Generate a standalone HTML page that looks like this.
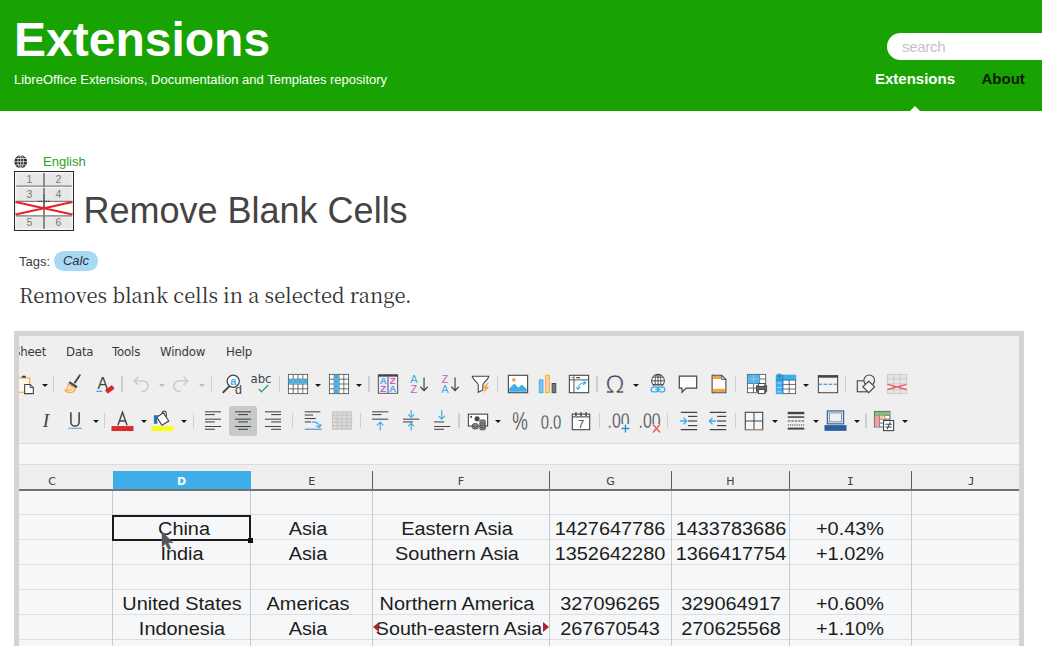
<!DOCTYPE html>
<html lang="en"><head><meta charset="utf-8"><title>Remove Blank Cells - LibreOffice Extensions</title>
<style>
*{margin:0;padding:0;box-sizing:border-box}
html,body{width:1042px;height:646px;overflow:hidden;background:#fff;font-family:"Liberation Sans",sans-serif}
#hd{position:absolute;left:0;top:0;width:1042px;height:111px;background:#18a303}
.site{position:absolute;left:14px;top:12px;font-size:48px;line-height:56px;font-weight:bold;color:#fff;white-space:nowrap}
.sub{position:absolute;left:14px;top:72px;font-size:13px;line-height:15px;color:#fff;white-space:nowrap}
.search{position:absolute;left:887px;top:33px;width:200px;height:27px;border-radius:13.5px;background:#fff}
.search span{position:absolute;left:15px;top:3.6px;font:15px/19px "Liberation Sans",sans-serif;letter-spacing:-0.3px;color:#c6c0c8}
nav a{position:absolute;top:69.5px;font-size:15px;line-height:17px;font-weight:bold;white-space:nowrap}
nav .n1{left:875px;color:#fff}
nav .n2{left:981.5px;color:#0a1a00}
.tri{position:absolute;left:910px;top:106px;width:0;height:0;border-left:5px solid transparent;border-right:5px solid transparent;border-bottom:5px solid #fff}
.globe{position:absolute;left:13.8px;top:155px;width:13.4px;height:13.4px}
.lang{position:absolute;left:43px;top:154px;font-size:13px;line-height:15px;color:#2ea11e}
.logo{position:absolute;left:14px;top:171px;width:60px;height:60px}
.title{position:absolute;left:83.5px;top:190px;font-size:36px;line-height:42px;font-weight:normal;color:#444;white-space:nowrap}
.tags{position:absolute;left:19px;top:254px;font-size:13px;line-height:15px;color:#3c3c3c}
.pill{position:absolute;left:54px;top:251px;width:44px;height:19.5px;border-radius:9.75px;background:#a8d9f4;font-size:13px;line-height:20px;font-style:italic;color:#2c3038;text-align:center}
.desc{position:absolute;left:19px;top:281px;font:20.15px/28px "Noto Serif CJK SC","DejaVu Serif",serif;color:#333;white-space:nowrap}
.shot{position:absolute;left:14px;top:331px;width:1010px;height:330px;background:#d4d4d4}
.inner{position:absolute;left:4.7px;top:4.7px;width:1000.6px;height:330px;background:#efefef;overflow:hidden}
.pg *{position:absolute}
.mn{top:342.7px;font:13px/17px "DejaVu Sans",sans-serif;color:#3a3a3a;white-space:nowrap;letter-spacing:-0.2px;transform:scaleX(0.905);transform-origin:0 50%}
.band1{left:0;top:443px;width:1042px;height:21.5px;background:#f5f6f7;border-top:1px solid #dcdcdc;border-bottom:1px solid #dcdcdc}
.band2{left:0;top:464.5px;width:1042px;height:26px;background:#eeeeee}
.gridbg{left:0;top:490px;width:1042px;height:200px;background:#f5f7f8}
.dsel{top:471px;height:19.5px;background:#3daee9}
.ch{top:474.7px;width:40px;text-align:center;font:11px/14px "DejaVu Sans",sans-serif;color:#444;-webkit-text-stroke:0.08px #444}
.ch.sel{color:#fff;font-weight:bold;-webkit-text-stroke:0}
.tick{top:471px;width:1.2px;height:19px;background:#606060}
.hline{left:0;top:489.3px;width:1042px;height:1.3px;background:#727272}
.gh{left:0;width:1042px;height:1px;background:#dcdee0}
.gv{top:490.5px;width:1px;height:200px;background:#c9cbcc}
.selbox{border:2px solid #1a1a1a}
.selh{width:5px;height:5px;background:#111}
.ct{width:300px;text-align:center;font:18px/22px "Liberation Sans",sans-serif;color:#1c1c1c;white-space:nowrap;transform:scaleX(1.105);transform-origin:50% 50%}
.ov{width:6px;height:10px}
.cur{width:14px;height:20px}
.ic{overflow:visible}
.dd{width:0;height:0;border-left:3px solid transparent;border-right:3px solid transparent;border-top:3.4px solid #1a1a1a}
.sp{width:1.2px;height:15.5px;background:#cfcfcf}
.dd.g{border-top-color:#bdbdbd}
.pressed{width:28px;height:30px;border-radius:3px;background:#c8c9ca}

</style></head>
<body>
<header id="hd">
  <h1 class="site">Extensions</h1>
  <p class="sub">LibreOffice Extensions, Documentation and Templates repository</p>
  <div class="search"><span>search</span></div>
  <nav><a class="n1">Extensions</a><a class="n2">About</a></nav>
  <i class="tri"></i>
</header>
<main>
  <svg class="globe" viewBox="0 0 16 16"><circle cx="8" cy="8" r="7.6" fill="#2b2b2b"/><g fill="none" stroke="#fff" stroke-width="0.85"><ellipse cx="8" cy="8" rx="3.3" ry="7.6"/><path d="M.4 8h15.2M8 .4v15.2M1.7 4.2h12.6M1.7 11.8h12.6"/></g></svg>
  <a class="lang">English</a>
  <svg class="logo" viewBox="0 0 60 60">
    <rect x="0.5" y="0.5" width="59" height="59" fill="#f4f4f4" stroke="#2a2a2a" stroke-width="1"/>
    <rect x="2.5" y="2.5" width="55" height="55" fill="#e7e7e7"/>
    <rect x="2" y="31" width="56" height="13" fill="#fff"/>
    <g stroke="#808080" stroke-width="1.2"><path d="M2 15.2H58M2 30.3H58M2 44.8H58"/><path d="M30 2V58" stroke-width="1.8"/></g>
    <path d="M2 16.4H58" stroke="#fafafa" stroke-width="0.8"/>
    <g font-family="Liberation Sans, sans-serif" font-size="10.5" fill="#777" text-anchor="middle"><text x="15.5" y="12.3">1</text><text x="44.5" y="12.3">2</text><text x="15.5" y="26.8">3</text><text x="44.5" y="26.8">4</text><text x="15.5" y="55">5</text><text x="44.5" y="55">6</text></g>
    <path d="M1.5 31L58.5 43.5M1.5 43.5L58.5 31" stroke="#e8212b" stroke-width="2.3"/>
    <path d="M24 30.3h12M30 24v13" stroke="#333" stroke-width="1" stroke-dasharray="1.5 1"/>
  </svg>
  <h2 class="title">Remove Blank Cells</h2>
  <span class="tags">Tags:</span><span class="pill">Calc</span>
  <p class="desc">Removes blank cells in a selected range.</p>
  <div class="shot"><div class="inner">
<div class="pg" style="position:absolute;left:-18.7px;top:-335.7px;width:1042px;height:700px">
<span class="mn" style="left:13.2px">Sheet</span>
<span class="mn" style="left:66px">Data</span>
<span class="mn" style="left:112.2px">Tools</span>
<span class="mn" style="left:160.3px">Window</span>
<span class="mn" style="left:225.9px">Help</span>
<div class="band1"></div><div class="band2"></div><div class="gridbg"></div>
<div class="dsel" style="left:112.6px;width:138.20000000000002px"></div>
<span class="ch" style="left:32px">C</span>
<span class="ch sel" style="left:161.7px">D</span>
<span class="ch" style="left:291.7px">E</span>
<span class="ch" style="left:441px">F</span>
<span class="ch" style="left:590.5px">G</span>
<span class="ch" style="left:710.5px">H</span>
<span class="ch" style="left:830.3px;font-family:DejaVu Sans Mono,monospace">I</span>
<span class="ch" style="left:951px;font-family:DejaVu Sans Mono,monospace">J</span>
<i class="tick" style="left:372.0px"></i>
<i class="tick" style="left:548.6px"></i>
<i class="tick" style="left:670.6px"></i>
<i class="tick" style="left:788.6px"></i>
<i class="tick" style="left:910.8px"></i>
<div class="hline"></div>
<i class="gh" style="top:514.3px"></i>
<i class="gh" style="top:539.2px"></i>
<i class="gh" style="top:564.2px"></i>
<i class="gh" style="top:589.2px"></i>
<i class="gh" style="top:614.2px"></i>
<i class="gh" style="top:639.3px"></i>
<i class="gv" style="left:112.1px"></i>
<i class="gv" style="left:250.3px"></i>
<i class="gv" style="left:372.1px"></i>
<i class="gv" style="left:548.7px"></i>
<i class="gv" style="left:670.7px"></i>
<i class="gv" style="left:788.7px"></i>
<i class="gv" style="left:910.9px"></i>
<div class="selbox" style="left:112.39999999999999px;top:514.5px;width:138.8px;height:26px"></div>
<div class="selh" style="left:248.20000000000002px;top:537.5px"></div>
<span class="ct" style="left:34.30px;top:518.00px">China</span>
<span class="ct" style="left:158.30px;top:518.00px">Asia</span>
<span class="ct" style="left:307.30px;top:518.00px">Eastern Asia</span>
<span class="ct" style="left:460.20px;top:518.00px">1427647786</span>
<span class="ct" style="left:580.70px;top:518.00px">1433783686</span>
<span class="ct" style="left:700.30px;top:518.00px">+0.43%</span>
<span class="ct" style="left:31.70px;top:543.00px">India</span>
<span class="ct" style="left:158.30px;top:543.00px">Asia</span>
<span class="ct" style="left:307.30px;top:543.00px">Southern Asia</span>
<span class="ct" style="left:460.20px;top:543.00px">1352642280</span>
<span class="ct" style="left:580.70px;top:543.00px">1366417754</span>
<span class="ct" style="left:700.30px;top:543.00px">+1.02%</span>
<span class="ct" style="left:31.70px;top:593.00px">United States</span>
<span class="ct" style="left:158.30px;top:593.00px">Americas</span>
<span class="ct" style="left:307.30px;top:593.00px">Northern America</span>
<span class="ct" style="left:460.20px;top:593.00px">327096265</span>
<span class="ct" style="left:580.70px;top:593.00px">329064917</span>
<span class="ct" style="left:700.30px;top:593.00px">+0.60%</span>
<span class="ct" style="left:31.70px;top:617.80px">Indonesia</span>
<span class="ct" style="left:158.30px;top:617.80px">Asia</span>
<span class="ct" style="left:309.30px;top:617.80px;transform:scaleX(1.093)">South-eastern Asia</span>
<span class="ct" style="left:460.20px;top:617.80px">267670543</span>
<span class="ct" style="left:580.70px;top:617.80px">270625568</span>
<span class="ct" style="left:700.30px;top:617.80px">+1.10%</span>
<svg class="ov" style="left:373.2px;top:622.3px" viewBox="0 0 6 10"><path d="M6 0v10L0 5z" fill="#a8242a"/></svg>
<svg class="ov" style="left:543px;top:622.3px" viewBox="0 0 6 10"><path d="M0 0v10L6 5z" fill="#a8242a"/></svg>
<svg class="cur" style="left:160.5px;top:531px" viewBox="0 0 14 20"><path d="M1 0.5V16l3.6-3.3L7.3 18.6l2.6-1.2L7.2 11.7H12z" fill="#555" stroke="#666" stroke-width="0.5"/></svg>
<svg class="ic" style="left:15.30px;top:372.60px;width:22px;height:22px" viewBox="0 0 24 24"><path d="M3.5 5.5h12.5v15.5h-12.5z" fill="#fcf6e8" stroke="#f2a33c" stroke-width="1.2"/><path d="M7 5.2a2.6 2.6 0 0 1 5.2 0z" fill="#414548"/><path d="M10.5 12.5h6l3.5 3.5v6.5h-9.5z" fill="#fff" stroke="#414548" stroke-width="1.2"/><path d="M16.5 12.5v3.5H20" fill="none" stroke="#414548" stroke-width="1"/></svg>
<svg class="ic" style="left:62.30px;top:372.60px;width:22px;height:22px" viewBox="0 0 24 24"><path d="M19.5 2.5l-5.5 8" stroke="#414548" stroke-width="2" stroke-linecap="round"/><path d="M8.5 9l8.5 5.5-1.3 2L7.2 11z" fill="#414548"/><path d="M6.8 12l7.8 5c-.6 2.8-2.3 4.3-5.4 4.3-2.6 0-5-.6-6-2.2 2.3-1.5 3-4 3.6-7.1z" fill="#fbe3b4" stroke="#f2a33c" stroke-width="1.1"/><path d="M4.5 18.5c2.5.5 4.5 0 6.5-1" stroke="#f2a33c" stroke-width="1" fill="none"/></svg>
<svg class="ic" style="left:93.50px;top:372.60px;width:22px;height:22px" viewBox="0 0 24 24"><text x="9.5" y="17" font-family="Liberation Sans, sans-serif" font-size="17" text-anchor="middle" fill="#414548">A</text><path d="M2.5 20H9" stroke="#3daee9" stroke-width="1.4"/><rect x="12.5" y="15.5" width="9.5" height="5" rx="1" transform="rotate(-35 17 18)" fill="#da2a2a"/></svg>
<svg class="ic" style="left:128.50px;top:371.10px;width:25px;height:25px" viewBox="0 0 24 24"><path d="M5 9.5h8.5a5 5 0 0 1 0 10h-1.5" fill="none" stroke="#c6c6c6" stroke-width="1.3"/><path d="M9 5.5L5 9.5l4 4" fill="none" stroke="#c6c6c6" stroke-width="1.2"/></svg>
<svg class="ic" style="left:168.30px;top:371.10px;width:25px;height:25px" viewBox="0 0 24 24"><path d="M19 9.5h-8.5a5 5 0 0 0 0 10h1.5" fill="none" stroke="#c6c6c6" stroke-width="1.3"/><path d="M15 5.5l4 4-4 4" fill="none" stroke="#c6c6c6" stroke-width="1.2"/></svg>
<svg class="ic" style="left:221.00px;top:372.60px;width:22px;height:22px" viewBox="0 0 24 24"><circle cx="13.3" cy="9" r="6.6" fill="#fff" stroke="#414548" stroke-width="1.3"/><path d="M9 14.5L2.5 21" stroke="#414548" stroke-width="2" stroke-linecap="round"/><text x="13.4" y="12.8" font-family="Liberation Sans, sans-serif" font-size="12" font-weight="bold" text-anchor="middle" fill="#3daee9">a</text><text x="19" y="22.5" font-family="Liberation Sans, sans-serif" font-size="13.5" text-anchor="middle" fill="#414548">d</text></svg>
<svg class="ic" style="left:250.00px;top:372.60px;width:22px;height:22px" viewBox="0 0 24 24"><text x="12" y="11" font-family="DejaVu Sans, sans-serif" font-size="13" text-anchor="middle" fill="#414548" textLength="23" lengthAdjust="spacingAndGlyphs">abc</text><path d="M9.5 17.5l3 3L20 13" fill="none" stroke="#3aa67c" stroke-width="1.5"/></svg>
<svg class="ic" style="left:287.00px;top:372.60px;width:22px;height:22px" viewBox="0 0 24 24"><rect x="1.5" y="1.5" width="21" height="21" fill="#fff" stroke="#54585c" stroke-width="0.95"/><path d="M6.75 1.5v21M12.00 1.5v21M17.25 1.5v21M1.5 6.75h21M1.5 12.00h21M1.5 17.25h21" stroke="#54585c" stroke-width="0.95" fill="none"/><rect x="2.1" y="6.9" width="19.8" height="4.6" fill="#3daee9"/><rect x="2.1" y="6.9" width="19.8" height="4.6" fill="none"/><path d="M6.75 6.75v5M12 6.75v5M17.25 6.75v5" stroke="#7fc8ee" stroke-width="0.8"/></svg>
<svg class="ic" style="left:327.70px;top:372.60px;width:22px;height:22px" viewBox="0 0 24 24"><rect x="1.5" y="1.5" width="21" height="21" fill="#fff" stroke="#54585c" stroke-width="0.95"/><path d="M6.75 1.5v21M12.00 1.5v21M17.25 1.5v21M1.5 6.75h21M1.5 12.00h21M1.5 17.25h21" stroke="#54585c" stroke-width="0.95" fill="none"/><rect x="6.9" y="2.1" width="4.6" height="19.8" fill="#3daee9"/><path d="M6.75 6.75h5M6.75 12h5M6.75 17.25h5" stroke="#7fc8ee" stroke-width="0.8"/></svg>
<svg class="ic" style="left:376.60px;top:372.60px;width:22px;height:22px" viewBox="0 0 24 24"><rect x="1.5" y="2" width="21" height="20" fill="#fff" stroke="#414548" stroke-width="1.2"/><rect x="2" y="4" width="10" height="17.5" fill="#e4ecfa"/><rect x="12" y="4" width="10" height="17.5" fill="#f7e8f5"/><path d="M1.5 3h21" stroke="#414548" stroke-width="2"/><path d="M12 4v18" stroke="#414548" stroke-width="1"/><g font-family="Liberation Sans, sans-serif" font-size="10.5" font-weight="bold" text-anchor="middle"><text x="6.8" y="12.3" fill="#3daee9">A</text><text x="6.8" y="21.2" fill="#c25fb6">Z</text><text x="17.2" y="12.3" fill="#c25fb6">Z</text><text x="17.2" y="21.2" fill="#3daee9">A</text></g></svg>
<svg class="ic" style="left:408.00px;top:372.60px;width:22px;height:22px" viewBox="0 0 24 24"><g font-family="Liberation Sans, sans-serif" font-size="12" text-anchor="middle"><text x="6.5" y="10.5" fill="#3daee9">A</text><text x="6.5" y="21.5" fill="#c25fb6">Z</text></g><path d="M17.5 5v14M13.5 15l4 4.2 4-4.2" fill="none" stroke="#414548" stroke-width="1.3"/></svg>
<svg class="ic" style="left:439.00px;top:372.60px;width:22px;height:22px" viewBox="0 0 24 24"><g font-family="Liberation Sans, sans-serif" font-size="12" text-anchor="middle"><text x="6.5" y="10.5" fill="#c25fb6">Z</text><text x="6.5" y="21.5" fill="#3daee9">A</text></g><path d="M17.5 5v14M13.5 15l4 4.2 4-4.2" fill="none" stroke="#414548" stroke-width="1.3"/></svg>
<svg class="ic" style="left:469.50px;top:372.60px;width:22px;height:22px" viewBox="0 0 24 24"><path d="M2.5 3.5h18c0 3-6 6.5-6.5 9.5v5.5l-5 2.5v-8c-.5-3-6.5-6.5-6.5-9.5z" fill="#fff" stroke="#414548" stroke-width="1.2"/><path d="M19 11l-5.5 6h3.5l-3 5.5 7-7.5h-3.5l3-4z" fill="#f2a33c"/></svg>
<svg class="ic" style="left:506.50px;top:372.60px;width:22px;height:22px" viewBox="0 0 24 24"><rect x="1.5" y="2.5" width="21" height="19" fill="#fff" stroke="#414548" stroke-width="1.2"/><path d="M2.5 20.5v-3.5l5.5-5.5 4.5 4.5 3.5-3.5 5.5 5v3z" fill="#3daee9"/><circle cx="7.5" cy="7.5" r="2" fill="#f2a33c"/></svg>
<svg class="ic" style="left:537.00px;top:372.60px;width:22px;height:22px" viewBox="0 0 24 24"><rect x="2.5" y="7.5" width="4" height="14" fill="#7cc4ea" stroke="#3daee9" stroke-width="1"/><rect x="9.5" y="2.5" width="4" height="19" fill="#fbd59a" stroke="#f2a33c" stroke-width="1"/><rect x="16.5" y="11.5" width="4" height="10" fill="#777" stroke="#414548" stroke-width="1"/></svg>
<svg class="ic" style="left:567.50px;top:372.60px;width:22px;height:22px" viewBox="0 0 24 24"><rect x="1.5" y="2.5" width="21" height="19" fill="#fff" stroke="#414548" stroke-width="1.2"/><path d="M6.5 3v18M2 7.5h20" stroke="#414548" stroke-width="1"/><path d="M4 5h1M9 5h4" stroke="#414548" stroke-width="1.5"/><path d="M10 17.5c0-4 3-7 8-7M15.5 8l3 2.5-3 2.5M12.5 15l-2.5 3-2.5-3" fill="none" stroke="#3daee9" stroke-width="1.2" transform="translate(1 0)"/></svg>
<svg class="ic" style="left:603.50px;top:372.60px;width:22px;height:22px" viewBox="0 0 24 24"><text x="12" y="21.5" font-family="DejaVu Sans, sans-serif" font-size="27" text-anchor="middle" fill="#414548" stroke="#efefef" stroke-width="0.8">Ω</text></svg>
<svg class="ic" style="left:646.70px;top:372.60px;width:22px;height:22px" viewBox="0 0 24 24"><circle cx="12" cy="8.5" r="7" fill="#fff" stroke="#414548" stroke-width="1.1"/><ellipse cx="12" cy="8.5" rx="3.2" ry="7" fill="none" stroke="#414548" stroke-width="1"/><path d="M5 8.5h14M12 1.5v14M6.5 4.5h11M6.5 12.5h11" stroke="#414548" stroke-width="1"/><rect x="4" y="14.5" width="16" height="7" fill="#efefef"/><rect x="4.5" y="15.5" width="7.5" height="5" rx="2.5" fill="none" stroke="#3daee9" stroke-width="1.4"/><rect x="12" y="15.5" width="7.5" height="5" rx="2.5" fill="none" stroke="#3daee9" stroke-width="1.4"/><path d="M9 18h6" stroke="#3daee9" stroke-width="1.4"/></svg>
<svg class="ic" style="left:677.00px;top:372.60px;width:22px;height:22px" viewBox="0 0 24 24"><path d="M2.5 3.5h19v13h-11.5l-4.5 4.5v-4.5h-3z" fill="#fff" stroke="#414548" stroke-width="1.3"/></svg>
<svg class="ic" style="left:707.70px;top:372.60px;width:22px;height:22px" viewBox="0 0 24 24"><path d="M4.5 2.5h10.5l4.5 4.5v14.5h-15z" fill="#fff" stroke="#414548" stroke-width="1.2"/><path d="M15 2.5v4.5h4.5" fill="none" stroke="#414548" stroke-width="1"/><rect x="5.2" y="3.2" width="9" height="3.3" fill="#f2a33c"/><rect x="5.2" y="17.3" width="13.6" height="3.5" fill="#f2a33c"/></svg>
<svg class="ic" style="left:746.00px;top:372.60px;width:22px;height:22px" viewBox="0 0 24 24"><rect x="1.5" y="1.5" width="20" height="20" fill="#fff" stroke="#54585c" stroke-width="0.95"/><path d="M8.17 1.5v20M14.83 1.5v20M1.5 6.50h20M1.5 11.50h20M1.5 16.50h20" stroke="#54585c" stroke-width="0.95" fill="none"/><rect x="2" y="2" width="12.8" height="9.5" fill="#3daee9" opacity=".9"/><path d="M8.2 2v9.5M2 6.5h12.8" stroke="#9ad4f3" stroke-width=".8"/><rect x="11.5" y="14" width="11" height="6" fill="#666" stroke="#414548" stroke-width="1"/><rect x="13.5" y="11.5" width="7" height="3" fill="#fff" stroke="#414548" stroke-width="1"/><rect x="13.5" y="18" width="7" height="4.5" fill="#fff" stroke="#414548" stroke-width="1"/></svg>
<svg class="ic" style="left:774.50px;top:372.60px;width:22px;height:22px" viewBox="0 0 24 24"><rect x="1.5" y="2.5" width="21" height="20" fill="#fff" stroke="#54585c" stroke-width="0.95"/><path d="M8.50 2.5v20M15.50 2.5v20M1.5 7.50h21M1.5 12.50h21M1.5 17.50h21" stroke="#54585c" stroke-width="0.95" fill="none"/><rect x="1" y="2" width="7.5" height="21" fill="#3daee9"/><rect x="1" y="2" width="22" height="5.5" fill="#3daee9"/><path d="M1 7.5h22M8.5 2v21" stroke="#1d7fb5" stroke-width=".9"/><path d="M4.7 0v6M2.2 1.5l5 3M7.2 1.5l-5 3" stroke="#1d7fb5" stroke-width=".9"/><path d="M2.5 11h4.5M2.5 15.8h4.5M2.5 20.5h4.5" stroke="#bfe3f7" stroke-width="1"/></svg>
<svg class="ic" style="left:816.50px;top:372.60px;width:22px;height:22px" viewBox="0 0 24 24"><rect x="1.5" y="3" width="21" height="18.5" fill="#f3f3f3" stroke="#414548" stroke-width="1.1"/><rect x="1" y="2.5" width="22" height="2.6" fill="#414548"/><path d="M1.5 12.2h21" stroke="#2f7fc0" stroke-width="1.1" stroke-dasharray="4 1.6"/></svg>
<svg class="ic" style="left:855.00px;top:372.60px;width:22px;height:22px" viewBox="0 0 24 24"><rect x="2.5" y="8.5" width="11" height="12" fill="#efefef" stroke="#414548" stroke-width="1.2"/><circle cx="15.5" cy="8" r="5.8" fill="#efefef" stroke="#414548" stroke-width="1.2"/><path d="M15 9l6.5 6-6.5 6.5-6.5-6.5z" fill="#f6f6f6" stroke="#414548" stroke-width="1.2"/></svg>
<svg class="ic" style="left:885.80px;top:372.60px;width:22px;height:22px" viewBox="0 0 24 24"><rect x="1.5" y="1.5" width="21" height="21" fill="#e6e6e6" stroke="#c8c8c8" stroke-width="1"/><rect x="1.5" y="12" width="21" height="6" fill="#f4f4f4"/><path d="M8.5 1.5v21M15.5 1.5v21M1.5 6.5h21M1.5 12h21M1.5 18h21" stroke="#c4c4c4" stroke-width=".9"/><path d="M1.5 12.5l21 5.5M1.5 18l21-5.5" stroke="#ee5a6a" stroke-width="1.5"/></svg>
<svg class="ic" style="left:34.60px;top:409.60px;width:22px;height:22px" viewBox="0 0 24 24"><text x="12" y="19" font-family="Liberation Serif, serif" font-style="italic" font-size="21" text-anchor="middle" fill="#414548">I</text></svg>
<svg class="ic" style="left:63.80px;top:409.60px;width:22px;height:22px" viewBox="0 0 24 24"><path d="M7.5 2.5v10.5a4.5 4.5 0 0 0 9 0V2.5" fill="none" stroke="#414548" stroke-width="1.7"/><path d="M4.5 20h15" stroke="#6aaedb" stroke-width="1.3"/></svg>
<svg class="ic" style="left:111.20px;top:409.10px;width:23px;height:23px" viewBox="0 0 24 24"><path d="M7.2 17L12 3.5 16.8 17M8.8 12.5h6.4" fill="none" stroke="#414548" stroke-width="1.5"/><rect x="0.5" y="17.8" width="23" height="5.2" fill="#da2a2a"/></svg>
<svg class="ic" style="left:151.30px;top:409.10px;width:23px;height:23px" viewBox="0 0 24 24"><path d="M6 8.5l7-4.5 5.5 8.5-7 4.5z" fill="#fff" stroke="#414548" stroke-width="1.2"/><path d="M11.5 5c0-4 4.5-4 4.5 0v3" fill="none" stroke="#414548" stroke-width="1.1"/><path d="M3 6.5h5.5l-2 2.5v6.5h-3.5z" fill="#2a6fc0"/><rect x="0.5" y="17.8" width="23" height="5.2" fill="#fbfb22"/></svg>
<svg class="ic" style="left:202.00px;top:409.60px;width:22px;height:22px" viewBox="0 0 24 24"><path d="M3.2 2H20.8" stroke="#414548" stroke-width="1.15"/><path d="M3.2 5H14" stroke="#414548" stroke-width="1.15"/><path d="M3.2 10H20.8" stroke="#414548" stroke-width="1.15"/><path d="M3.2 13H14" stroke="#414548" stroke-width="1.15"/><path d="M3.2 18H20.8" stroke="#414548" stroke-width="1.15"/><path d="M3.2 21H14" stroke="#414548" stroke-width="1.15"/></svg>
<div class="pressed" style="left:229.2px;top:405.5px"></div>
<svg class="ic" style="left:232.20px;top:409.60px;width:22px;height:22px" viewBox="0 0 24 24"><path d="M3.2 2H20.8" stroke="#414548" stroke-width="1.15"/><path d="M6.6 5H17.4" stroke="#414548" stroke-width="1.15"/><path d="M3.2 10H20.8" stroke="#414548" stroke-width="1.15"/><path d="M6.6 13H17.4" stroke="#414548" stroke-width="1.15"/><path d="M3.2 18H20.8" stroke="#414548" stroke-width="1.15"/><path d="M6.6 21H17.4" stroke="#414548" stroke-width="1.15"/></svg>
<svg class="ic" style="left:262.00px;top:409.60px;width:22px;height:22px" viewBox="0 0 24 24"><path d="M3.2 2H20.8" stroke="#414548" stroke-width="1.15"/><path d="M10 5H20.8" stroke="#414548" stroke-width="1.15"/><path d="M3.2 10H20.8" stroke="#414548" stroke-width="1.15"/><path d="M10 13H20.8" stroke="#414548" stroke-width="1.15"/><path d="M3.2 18H20.8" stroke="#414548" stroke-width="1.15"/><path d="M10 21H20.8" stroke="#414548" stroke-width="1.15"/></svg>
<svg class="ic" style="left:301.70px;top:409.60px;width:22px;height:22px" viewBox="0 0 24 24"><path d="M3 2H20" stroke="#414548" stroke-width="1.15"/><path d="M3 5.5H12" stroke="#414548" stroke-width="1.15"/><path d="M3 9.3H15" stroke="#414548" stroke-width="1.15"/><path d="M3 13H10" stroke="#414548" stroke-width="1.15"/><path d="M3 21h18.5" stroke="#5b93c4" stroke-width="1.3"/><path d="M11 13c5 0 7.5 1.5 8.5 5.5M15.3 17.3l3.9 1.7 1.8-3.8" fill="none" stroke="#3daee9" stroke-width="1.3"/></svg>
<svg class="ic" style="left:331.30px;top:409.60px;width:22px;height:22px" viewBox="0 0 24 24"><rect x="1.5" y="2" width="21" height="19" fill="#dadada" stroke="#c2c2c2" stroke-width="1"/><path d="M6.75 2v19M12.00 2v19M17.25 2v19M1.5 5.80h21M1.5 9.60h21M1.5 13.40h21M1.5 17.20h21" stroke="#c2c2c2" stroke-width="1" fill="none"/></svg>
<svg class="ic" style="left:369.40px;top:409.60px;width:22px;height:22px" viewBox="0 0 24 24"><path d="M3.4 2H21" stroke="#414548" stroke-width="1.15"/><path d="M3.4 5H13.6" stroke="#414548" stroke-width="1.15"/><path d="M3.4 10H21" stroke="#414548" stroke-width="1.15"/><path d="M12.2 22.3V13.4M8.7 16.8l3.5-3.5 3.5 3.5" fill="none" stroke="#3daee9" stroke-width="1.3"/></svg>
<svg class="ic" style="left:400.00px;top:409.60px;width:22px;height:22px" viewBox="0 0 24 24"><path d="M3.3 10H21" stroke="#414548" stroke-width="1.15"/><path d="M3.3 13H14.2" stroke="#414548" stroke-width="1.15"/><path d="M12.2 .4V8M8.9 4.7l3.3 3.3 3.3-3.3M12.2 22.3V14.6M8.9 17.9l3.3-3.3 3.3 3.3" fill="none" stroke="#3daee9" stroke-width="1.3"/></svg>
<svg class="ic" style="left:430.50px;top:409.60px;width:22px;height:22px" viewBox="0 0 24 24"><path d="M3.4 13H14.3" stroke="#414548" stroke-width="1.15"/><path d="M3.4 18H21" stroke="#414548" stroke-width="1.15"/><path d="M3.4 21H14.3" stroke="#414548" stroke-width="1.15"/><path d="M11.7 .4V9.9M8.2 6.4l3.5 3.5 3.5-3.5" fill="none" stroke="#3daee9" stroke-width="1.3"/></svg>
<svg class="ic" style="left:467.00px;top:409.60px;width:22px;height:22px" viewBox="0 0 24 24"><rect x="1.5" y="4.5" width="21" height="13" fill="#fff" stroke="#414548" stroke-width="1.2"/><circle cx="11" cy="9.5" r="2.8" fill="#414548"/><rect x="3.5" y="6.5" width="2" height="2" fill="#414548"/><g fill="#888" stroke="#414548" stroke-width=".9"><ellipse cx="9" cy="19" rx="3.3" ry="1.8"/><ellipse cx="9" cy="16.5" rx="3.3" ry="1.8"/><ellipse cx="17" cy="20" rx="3.3" ry="1.8"/><ellipse cx="17" cy="17.5" rx="3.3" ry="1.8"/><ellipse cx="17" cy="15" rx="3.3" ry="1.8"/><ellipse cx="17" cy="12.5" rx="3.3" ry="1.8"/></g></svg>
<svg class="ic" style="left:509.00px;top:409.60px;width:22px;height:22px" viewBox="0 0 24 24"><text x="12" y="21.5" font-family="Liberation Sans, sans-serif" font-size="28" text-anchor="middle" fill="#3f4346" stroke="#efefef" stroke-width=".3" textLength="17" lengthAdjust="spacingAndGlyphs">%</text></svg>
<svg class="ic" style="left:540.00px;top:409.60px;width:22px;height:22px" viewBox="0 0 24 24"><text x="12" y="20.3" font-family="Liberation Sans, sans-serif" font-size="23" text-anchor="middle" fill="#3f4346" stroke="#efefef" stroke-width=".35" textLength="22.5" lengthAdjust="spacingAndGlyphs">0.0</text></svg>
<svg class="ic" style="left:570.00px;top:409.60px;width:22px;height:22px" viewBox="0 0 24 24"><rect x="2.5" y="4.5" width="19" height="17" fill="#fff" stroke="#414548" stroke-width="1.2"/><path d="M2.5 7.5h19" stroke="#414548" stroke-width="1.2"/><path d="M6.5 2.5v4M12 2.5v4M17.5 2.5v4" stroke="#414548" stroke-width="1.6"/><text x="12" y="19.5" font-family="Liberation Sans, sans-serif" font-size="12" text-anchor="middle" fill="#414548">7</text></svg>
<svg class="ic" style="left:607.40px;top:408.60px;width:24px;height:24px" viewBox="0 0 24 24"><text x="0.5" y="18.5" font-family="Liberation Sans, sans-serif" font-size="21.5" fill="#3f4346" stroke="#efefef" stroke-width=".35" textLength="22" lengthAdjust="spacingAndGlyphs">.00</text><rect x="14" y="15" width="9" height="9" fill="#efefef"/><path d="M18.5 15.5v8M14.5 19.5h8" stroke="#2a8fd0" stroke-width="1.4"/></svg>
<svg class="ic" style="left:637.60px;top:408.60px;width:24px;height:24px" viewBox="0 0 24 24"><text x="0.5" y="18.5" font-family="Liberation Sans, sans-serif" font-size="21.5" fill="#3f4346" stroke="#efefef" stroke-width=".35" textLength="22" lengthAdjust="spacingAndGlyphs">.00</text><rect x="14" y="15" width="9" height="9" fill="#efefef"/><path d="M15 15.5l7 8M22 15.5l-7 8" stroke="#e06060" stroke-width="1.4"/></svg>
<svg class="ic" style="left:678.00px;top:409.60px;width:22px;height:22px" viewBox="0 0 24 24"><path d="M3 2.5h18M3 21.5h18" stroke="#414548" stroke-width="1.3"/><path d="M11 7H21" stroke="#414548" stroke-width="1.3"/><path d="M11 12H21" stroke="#414548" stroke-width="1.3"/><path d="M11 17H21" stroke="#414548" stroke-width="1.3"/><path d="M2 12h7M6 8.5l3.5 3.5-3.5 3.5" fill="none" stroke="#3daee9" stroke-width="1.4"/></svg>
<svg class="ic" style="left:707.00px;top:409.60px;width:22px;height:22px" viewBox="0 0 24 24"><path d="M3 2.5h18M3 21.5h18" stroke="#414548" stroke-width="1.3"/><path d="M11 7H21" stroke="#414548" stroke-width="1.3"/><path d="M11 12H21" stroke="#414548" stroke-width="1.3"/><path d="M11 17H21" stroke="#414548" stroke-width="1.3"/><path d="M9.5 12h-7M6 8.5l-3.5 3.5 3.5 3.5" fill="none" stroke="#3daee9" stroke-width="1.4"/></svg>
<svg class="ic" style="left:743.00px;top:409.60px;width:22px;height:22px" viewBox="0 0 24 24"><rect x="2.5" y="2.5" width="19" height="19" fill="#f6f6f6" stroke="#414548" stroke-width="1.2"/><path d="M12 2.5v19M2.5 12h19" stroke="#414548" stroke-width="1.1"/><path d="M2.5 21.8h19" stroke="#e8c48a" stroke-width="1"/></svg>
<svg class="ic" style="left:784.60px;top:409.60px;width:22px;height:22px" viewBox="0 0 24 24"><path d="M3 3.3h18" stroke="#414548" stroke-width="2.6"/><path d="M3 7.7h18" stroke="#414548" stroke-width="1.7"/><path d="M3 12.1h18" stroke="#414548" stroke-width="1.1" stroke-dasharray="2.6 1.2"/><path d="M3 16.4h18" stroke="#414548" stroke-width="1.1" stroke-dasharray="1.4 1"/><path d="M3 20.3h18" stroke="#414548" stroke-width="2.2"/></svg>
<svg class="ic" style="left:824.30px;top:409.10px;width:23px;height:23px" viewBox="0 0 24 24"><rect x="3.5" y="2" width="17" height="13.5" fill="#dfe3e8" stroke="#2f5f98" stroke-width="1.2"/><rect x="5.6" y="4.1" width="12.8" height="9.3" fill="#efefef" stroke="#55708f" stroke-width=".7"/><rect x="0.5" y="16.8" width="23" height="6" fill="#2a5f9e"/></svg>
<svg class="ic" style="left:873.40px;top:409.60px;width:22px;height:22px" viewBox="0 0 24 24"><rect x="1.5" y="1.5" width="17" height="17" fill="#fff" stroke="#54585c" stroke-width="1"/><path d="M7.17 1.5v17M12.83 1.5v17M1.5 5.75h17M1.5 10.00h17M1.5 14.25h17" stroke="#54585c" stroke-width="1" fill="none"/><rect x="2" y="2" width="16" height="3.8" fill="#7fbf7a"/><rect x="2" y="6.2" width="5" height="12" fill="#f2a0a0"/><rect x="7.8" y="6.2" width="5" height="3.8" fill="#f6c99a"/><rect x="11.5" y="11.5" width="11" height="11" fill="#fff" stroke="#414548" stroke-width="1.2"/><path d="M13.5 15.5h7M13.5 18.5h7M19 13l-3.5 8" stroke="#414548" stroke-width="1.1"/></svg>
<i class="dd" style="left:41.60px;top:384.30px"></i>
<i class="dd g" style="left:158.50px;top:384.30px"></i>
<i class="dd g" style="left:198.50px;top:384.30px"></i>
<i class="dd" style="left:315.00px;top:384.30px"></i>
<i class="dd" style="left:356.00px;top:384.30px"></i>
<i class="dd" style="left:632.50px;top:384.30px"></i>
<i class="dd" style="left:802.60px;top:384.30px"></i>
<i class="dd" style="left:92.50px;top:420.20px"></i>
<i class="dd" style="left:140.70px;top:420.20px"></i>
<i class="dd" style="left:181.00px;top:420.20px"></i>
<i class="dd" style="left:495.30px;top:420.20px"></i>
<i class="dd" style="left:772.40px;top:420.20px"></i>
<i class="dd" style="left:813.00px;top:420.20px"></i>
<i class="dd" style="left:854.20px;top:420.20px"></i>
<i class="dd" style="left:901.60px;top:420.20px"></i>
<i class="sp" style="left:53.10px;top:376px"></i>
<i class="sp" style="left:121.40px;top:376px"></i>
<i class="sp" style="left:210.90px;top:376px"></i>
<i class="sp" style="left:278.90px;top:376px"></i>
<i class="sp" style="left:368.40px;top:376px"></i>
<i class="sp" style="left:496.90px;top:376px"></i>
<i class="sp" style="left:596.40px;top:376px"></i>
<i class="sp" style="left:735.20px;top:376px"></i>
<i class="sp" style="left:844.70px;top:376px"></i>
<i class="sp" style="left:103.90px;top:412.5px"></i>
<i class="sp" style="left:192.90px;top:412.5px"></i>
<i class="sp" style="left:291.90px;top:412.5px"></i>
<i class="sp" style="left:359.70px;top:412.5px"></i>
<i class="sp" style="left:458.40px;top:412.5px"></i>
<i class="sp" style="left:598.70px;top:412.5px"></i>
<i class="sp" style="left:667.10px;top:412.5px"></i>
<i class="sp" style="left:735.20px;top:412.5px"></i>
<i class="sp" style="left:865.40px;top:412.5px"></i>
</div>
  </div></div>
</main>
</body></html>
